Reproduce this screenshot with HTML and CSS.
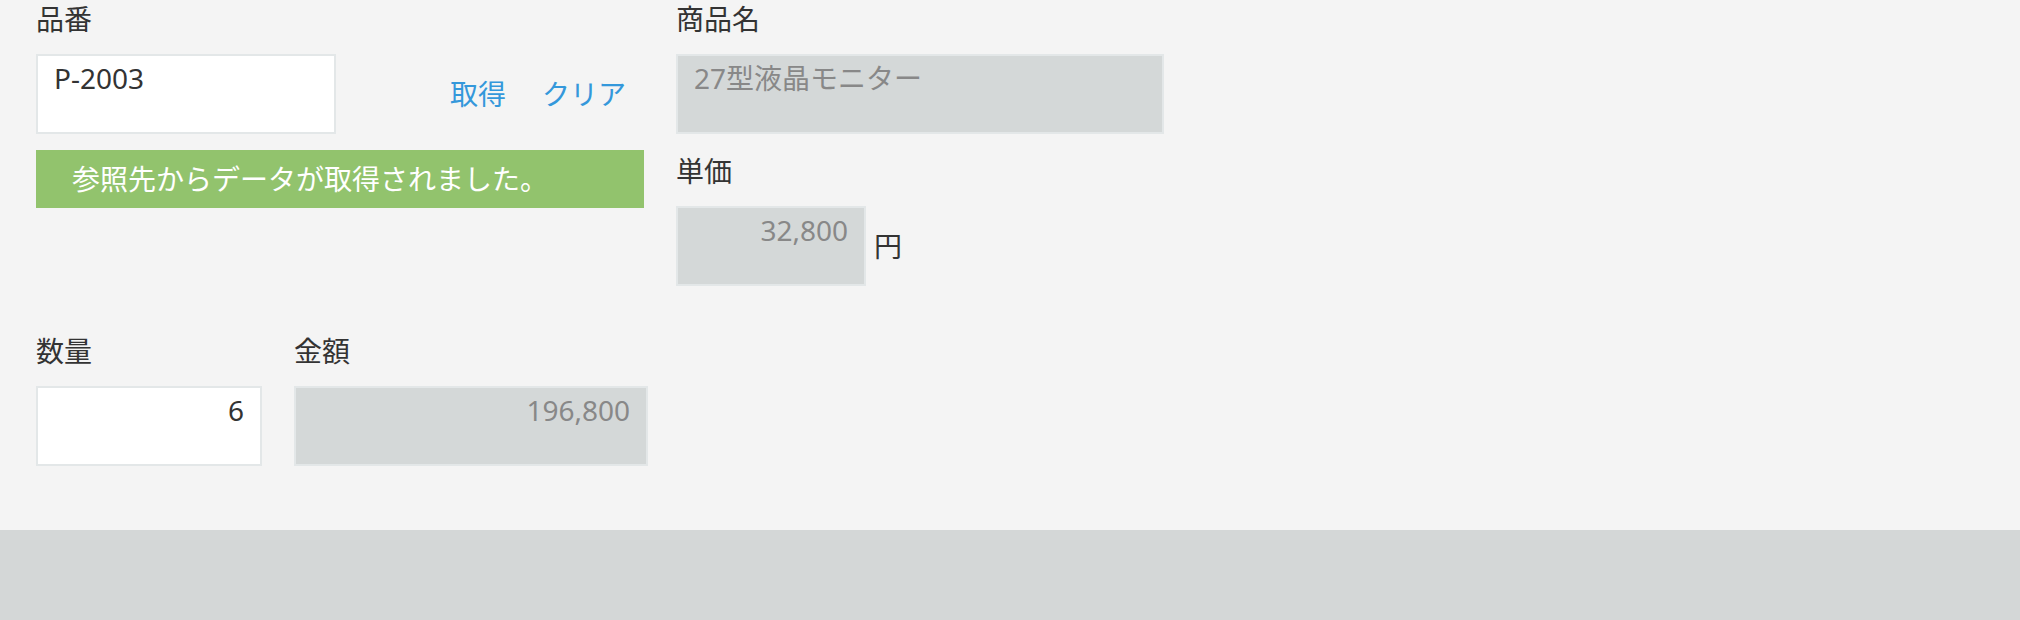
FILE: index.html
```html
<!DOCTYPE html>
<html lang="ja">
<head>
<meta charset="utf-8">
<title>商品ルックアップ</title>
<link rel="stylesheet" href="styles.css">
</head>
<body>
<main class="page">
  <section class="form">
    <div class="row row-top">
      <div class="field field-lookup">
        <div class="label">品番</div>
        <div class="lookup-line">
          <div class="input w-code">P-2003</div>
          <div class="lookup-actions">
            <button class="link-btn" type="button">取得</button>
            <button class="link-btn" type="button">クリア</button>
          </div>
        </div>
        <div class="lookup-message">参照先からデータが取得されました。</div>
      </div>
      <div class="col">
        <div class="field">
          <div class="label">商品名</div>
          <div class="input is-disabled w-name">27型液晶モニター</div>
        </div>
        <div class="field field-next">
          <div class="label">単価</div>
          <div class="value-line">
            <div class="input is-disabled is-number w-price">32,800</div>
            <span class="unit">円</span>
          </div>
        </div>
      </div>
    </div>
    <div class="row row-bottom">
      <div class="field">
        <div class="label">数量</div>
        <div class="input is-number w-qty">6</div>
      </div>
      <div class="field">
        <div class="label">金額</div>
        <div class="input is-disabled is-number w-amount">196,800</div>
      </div>
    </div>
  </section>
  <footer class="band"></footer>
</main>
</body>
</html>
```

FILE: styles.css
```css
* {
  box-sizing: border-box;
}

html,
body {
  margin: 0;
  padding: 0;
}

body {
  background: #f4f4f4;
  color: #333333;
  font-family: "Noto Sans", "Noto Sans CJK JP", sans-serif;
  font-size: 28px;
}

.page {
  display: flex;
  flex-direction: column;
  min-height: 620px;
}

.form {
  padding: 1px 0 64px 36px;
  background: #f4f4f4;
}

.row {
  display: flex;
  gap: 32px;
  align-items: flex-start;
}

.row-bottom {
  margin-top: 47px;
}

.col {
  display: flex;
  flex-direction: column;
}

.field {
  display: flex;
  flex-direction: column;
}

.field-next {
  margin-top: 19px;
}

.label {
  height: 36px;
  line-height: 36px;
  margin-bottom: 17px;
  color: #333333;
  white-space: nowrap;
}

.input {
  height: 80px;
  border: 2px solid #e3e7e8;
  background: #ffffff;
  padding: 4px 16px 0;
  line-height: 36px;
  color: #333333;
  white-space: nowrap;
}

.input.is-disabled {
  background: #d4d8d8;
  color: #888888;
}

.input.is-number {
  text-align: right;
}

.w-code {
  width: 300px;
}

.w-name {
  width: 488px;
}

.w-price {
  width: 190px;
}

.w-qty {
  width: 226px;
}

.w-amount {
  width: 354px;
}

.lookup-line {
  display: flex;
  align-items: center;
  justify-content: space-between;
  width: 608px;
}

.lookup-actions {
  display: flex;
  align-items: center;
}

.link-btn {
  background: none;
  border: 0;
  margin: 0;
  padding: 0 18px;
  font: inherit;
  line-height: 40px;
  color: #3498db;
  cursor: pointer;
}

.lookup-message {
  width: 608px;
  height: 58px;
  margin-top: 16px;
  padding-left: 36px;
  line-height: 58px;
  background: #92c36d;
  color: #ffffff;
  white-space: nowrap;
}

.value-line {
  display: flex;
  align-items: center;
}

.unit {
  margin-left: 8px;
  line-height: 40px;
  color: #333333;
}

.band {
  flex: 1;
  background: #d4d7d7;
}
```
